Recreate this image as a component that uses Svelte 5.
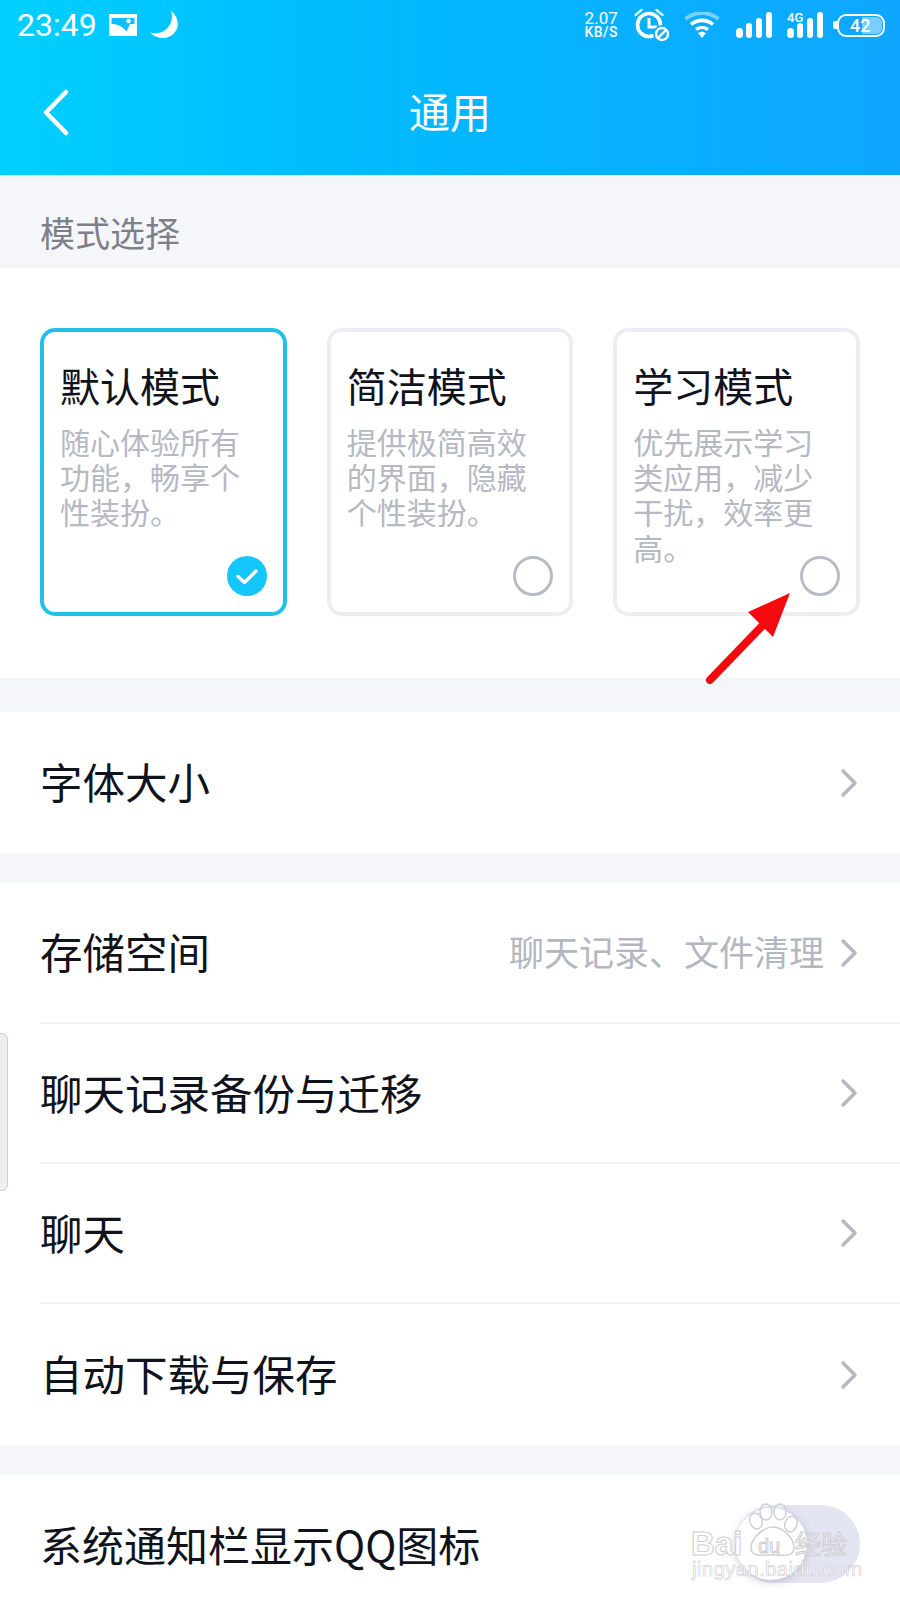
<script>
  const modes = [
    { title: '默认模式', lines: ['随心体验所有', '功能，畅享个', '性装扮。'], active: true },
    { title: '简洁模式', lines: ['提供极简高效', '的界面，隐藏', '个性装扮。'], active: false },
    { title: '学习模式', lines: ['优先展示学习', '类应用，减少', '干扰，效率更', '高。'], active: false }
  ];
  const storage = [
    { label: '存储空间', hint: '聊天记录、文件清理' },
    { label: '聊天记录备份与迁移' },
    { label: '聊天' },
    { label: '自动下载与保存' }
  ];
</script>

{#snippet chevron()}
  <svg class="chevron" width="18" height="30" viewBox="0 0 18 30">
    <path d="M3 3 L15 15 L3 27" fill="none" stroke="#b4b6c0" stroke-width="3.4" stroke-linecap="round" stroke-linejoin="round" />
  </svg>
{/snippet}

{#snippet bars()}
  <svg width="37" height="26" viewBox="0 0 37 26">
    <rect x="0" y="16" width="7" height="10" rx="3.5" fill="#fff" />
    <rect x="10" y="11" width="6" height="15" rx="3" fill="#fff" />
    <rect x="20" y="6" width="6" height="20" rx="3" fill="#fff" />
    <rect x="30" y="0" width="6" height="26" rx="3" fill="#fff" />
  </svg>
{/snippet}

<div class="page">
  <header class="header">
    <div class="status">
      <div class="status-left">
        <span class="time">23:49</span>
        <svg width="28" height="22" viewBox="0 0 28 22">
          <rect width="28" height="22" fill="#fff" />
          <path fill="#0cc0ff" d="M2.500 4H25.500V10H21L17.500 17.500C14 12.500 8.500 10 2.500 10Z" />
          <circle cx="19.500" cy="7" r="2.200" fill="#fff" />
        </svg>
        <svg class="moon" width="28" height="28" viewBox="0 0 28 28">
          <path fill="#fff" d="M21 0C28 5 30 15 25 21C19 29 8 29 0 21.500C8 23.500 15 21 19 15C22 10 23 5 21 0Z" />
        </svg>
      </div>
      <div class="status-right">
        <div class="speed"><span>2.07</span><span>KB/S</span></div>
        <svg class="alarm" width="38" height="34" viewBox="0 0 38 34">
          <circle cx="15" cy="17" r="11.500" fill="none" stroke="#fff" stroke-width="3.600" />
          <path d="M15 10V19H23" fill="none" stroke="#fff" stroke-width="3" />
          <path d="M1.500 7L7.500 2M22.500 2L28.500 7" stroke="#fff" stroke-width="2.500" stroke-linecap="round" opacity="0.800" />
          <circle cx="28" cy="26" r="9" fill="#16acff" />
          <circle cx="28" cy="26" r="6" fill="none" stroke="#fff" stroke-width="2.400" />
          <path d="M24.500 29.500L31.500 22.500" stroke="#fff" stroke-width="2.400" />
        </svg>
        <svg class="wifi" width="36" height="26" viewBox="0 0 36 26">
          <path d="M1.500 7C11 -1 25 -1 34.500 7" fill="none" stroke="#fff" stroke-width="3.800" opacity="0.450" />
          <path d="M7 12.500C13.500 7 22.500 7 29 12.500" fill="none" stroke="#fff" stroke-width="3.600" />
          <path d="M12 17.500C15.500 15 20.500 15 24 17.500" fill="none" stroke="#fff" stroke-width="3.400" />
          <path d="M14 21L18 19.500L22 21L18 26Z" fill="#fff" />
        </svg>
        <div class="signal">{@render bars()}</div>
        <div class="signal-4g">
          <span class="tag">4G</span>
          {@render bars()}
        </div>
        <div class="battery-wrap">
          <span class="nub"></span>
          <div class="battery"><span class="fill"></span><span class="level">42</span></div>
        </div>
      </div>
    </div>
    <div class="nav">
      <svg class="back" width="28" height="48" viewBox="0 0 28 48">
        <path d="M24 3L4 23.500L24 44" fill="none" stroke="#fff" stroke-width="4.500" stroke-linecap="round" stroke-linejoin="round" />
      </svg>
      <h1>通用</h1>
    </div>
  </header>

  <div class="band label">模式选择</div>

  <section class="modes">
    {#each modes as mode}
      <div class="mode" class:active={mode.active}>
        <div class="mode-title">{mode.title}</div>
        <div class="mode-desc">
          {#each mode.lines as line}<div>{line}</div>{/each}
        </div>
        {#if mode.active}
          <svg class="radio" width="40" height="40" viewBox="0 0 40 40">
            <circle cx="20" cy="20" r="20" fill="#13c6fb" />
            <path d="M11 20.500L17.500 26.500L29 15" fill="none" stroke="#fff" stroke-width="3.400" stroke-linecap="round" stroke-linejoin="round" />
          </svg>
        {:else}
          <span class="radio empty"></span>
        {/if}
      </div>
    {/each}
  </section>

  <div class="band small"></div>

  <section class="group">
    <div class="row single"><span>字体大小</span>{@render chevron()}</div>
  </section>

  <div class="band thin"></div>

  <section class="group">
    {#each storage as item}
      <div class="row">
        <span>{item.label}</span>
        {#if item.hint}<span class="hint">{item.hint}</span>{/if}
        {@render chevron()}
      </div>
    {/each}
  </section>

  <div class="band thin"></div>

  <section class="group">
    <div class="row last">
      <span>系统通知栏显示QQ图标</span>
      <span class="toggle"><span class="knob"></span></span>
    </div>
  </section>

  <!-- annotation and overlays painted on the screenshot -->
  <svg class="arrow" width="90" height="96" viewBox="0 0 90 96">
    <path d="M5 89L60 32" stroke="#f4090f" stroke-width="8" stroke-linecap="round" />
    <path d="M85 2L43 21L68 46Z" fill="#f4090f" />
  </svg>
  <div class="side-tab"></div>
  <div class="watermark">
    <svg class="paw" width="56" height="56" viewBox="0 0 56 56">
      <g fill="rgba(255,255,255,0.25)" stroke="#cfcfd3" stroke-width="1.500">
        <ellipse cx="11" cy="18" rx="6" ry="8" transform="rotate(-20 11 18)" />
        <ellipse cx="21" cy="9" rx="6" ry="8" />
        <ellipse cx="35" cy="9" rx="6" ry="8" />
        <ellipse cx="46" cy="21" rx="6" ry="8" transform="rotate(20 46 21)" />
        <path d="M28 24C38 24 50 36 49 46C48 54 38 52 28 52C18 52 7 54 6 46C5 36 18 24 28 24Z" />
      </g>
    </svg>
    <span class="wm-bai">Bai</span><span class="wm-du">du</span><span class="wm-cn">经验</span>
    <div class="wm-url">jingyan.baidu.com</div>
  </div>
</div>

<style>
  :global(body) {
    background: #fff;
  }

  .page {
    position: relative;
    width: 900px;
    height: 1600px;
    overflow: hidden;
    background: #fff;
    color: #10131c;
    font-family: "Noto Sans CJK SC", "Noto Sans", sans-serif;
  }

  .header {
    height: 175px;
    background: linear-gradient(90deg, #00d0ff 0%, #00bcff 35%, #0ea6ff 100%);
    color: #fff;
  }

  .status {
    height: 50px;
    display: flex;
    justify-content: space-between;
    align-items: center;
    padding: 0 15px 0 17px;
  }

  .status-left,
  .status-right {
    display: flex;
    align-items: center;
  }

  .time {
    font-family: Roboto, sans-serif;
    font-size: 32px;
    line-height: 1;
    margin-right: 12px;
  }

  .moon {
    margin-left: 13px;
  }

  .speed {
    display: flex;
    flex-direction: column;
    align-items: center;
    font-family: Roboto, sans-serif;
    font-size: 17px;
    line-height: 14px;
    margin-right: 16px;
  }

  .speed span:last-child {
    font-size: 14px;
    font-weight: 500;
    letter-spacing: 0.5px;
  }

  .wifi {
    margin: 0 16px 0 12px;
  }

  .signal {
    display: flex;
    margin-right: 14px;
  }

  .signal-4g {
    position: relative;
    margin-right: 9px;
    display: flex;
  }

  .tag {
    position: absolute;
    left: 0;
    top: 0;
    font-family: Roboto, sans-serif;
    font-size: 13px;
    font-weight: 500;
    line-height: 12px;
  }

  .battery-wrap {
    display: flex;
    align-items: center;
  }

  .nub {
    width: 4px;
    height: 8px;
    background: #fff;
    border-radius: 2px 0 0 2px;
  }

  .battery {
    position: relative;
    width: 48px;
    height: 23px;
    box-sizing: border-box;
    border: 2px solid #fff;
    border-radius: 9px;
    padding-left: 11px;
    display: flex;
    align-items: center;
    overflow: hidden;
  }

  .battery .fill {
    position: absolute;
    right: 1px;
    top: 1px;
    bottom: 1px;
    width: 20px;
    border-radius: 0 6px 6px 0;
    background: rgba(255, 255, 255, 0.45);
  }

  .level {
    position: relative;
    font-family: Roboto, sans-serif;
    font-size: 18px;
    font-weight: 500;
  }

  .nav {
    position: relative;
    height: 125px;
    display: flex;
    align-items: center;
    justify-content: center;
  }

  .back {
    position: absolute;
    left: 42px;
    top: 39px;
  }

  h1 {
    margin: 0 0 4px;
    font-size: 41px;
    font-weight: 400;
    line-height: 1;
  }

  .band {
    background: #f5f6fa;
  }

  .label {
    height: 93px;
    box-sizing: border-box;
    padding: 34px 0 0 40px;
    font-size: 35px;
    line-height: 46px;
    color: #7e8089;
  }

  .small {
    height: 34px;
  }

  .thin {
    height: 30px;
  }

  .modes {
    display: flex;
    gap: 40px;
    padding: 60px 40px 62px;
    height: 410px;
    box-sizing: border-box;
  }

  .mode {
    position: relative;
    flex: 1;
    box-sizing: border-box;
    border: 4px solid #eceef4;
    border-radius: 15px;
    padding: 24px 0 0 16px;
  }

  .mode.active {
    border-color: #22c0e9;
  }

  .mode-title {
    font-size: 40px;
    line-height: 58px;
    white-space: nowrap;
  }

  .mode-desc {
    margin-top: 10px;
    font-size: 30px;
    line-height: 35.200px;
    color: #b6b8c2;
    white-space: nowrap;
  }

  .radio {
    position: absolute;
    right: 16px;
    bottom: 16px;
    width: 40px;
    height: 40px;
    box-sizing: border-box;
  }

  .radio.empty {
    border: 3px solid #babcc5;
    border-radius: 50%;
  }

  .group {
    padding-left: 40px;
  }

  .row {
    position: relative;
    height: 140px;
    display: flex;
    align-items: center;
    font-size: 42.500px;
    border-bottom: 2px solid #f0f1f4;
    box-sizing: border-box;
    padding: 0 42px 4px 0;
  }

  .row:first-child,
  .row:last-child {
    height: 141px;
  }

  .row:last-child,
  .row.single {
    border-bottom: 0;
  }

  .row.last {
    height: 125px;
    align-items: flex-start;
    padding: 38px 0 0;
    font-size: 42px;
  }

  .row .chevron {
    margin-left: auto;
    margin-top: 4px;
  }

  .hint {
    margin-left: auto;
    margin-right: 16px;
    font-size: 35px;
    color: #b4b6c0;
  }

  .hint + .chevron {
    margin-left: 0;
  }

  .toggle {
    position: absolute;
    right: 40px;
    top: 30px;
    width: 125px;
    height: 78px;
    border-radius: 39px;
    background: #e4e5f3;
  }

  .knob {
    position: absolute;
    left: 0;
    top: 3px;
    width: 72px;
    height: 72px;
    border-radius: 50%;
    background: #fff;
    box-shadow: 0 2px 8px rgba(90, 90, 130, 0.3);
  }

  .arrow {
    position: absolute;
    left: 705px;
    top: 591px;
  }

  .side-tab {
    position: absolute;
    left: -2px;
    top: 1033px;
    width: 10px;
    height: 158px;
    box-sizing: border-box;
    border: 1px solid #d0d0d4;
    border-radius: 0 6px 6px 0;
    background: #eeeef2;
  }

  .watermark {
    position: absolute;
    left: 690px;
    top: 1502px;
    width: 170px;
    height: 84px;
    font-family: "Liberation Sans", sans-serif;
    color: rgba(255, 255, 255, 0.75);
    -webkit-text-stroke: 1px #cdcdd1;
  }

  .paw {
    position: absolute;
    left: 55px;
    top: 1px;
  }

  .wm-bai {
    position: absolute;
    left: 1px;
    top: 22px;
    font-size: 33px;
    font-weight: 700;
    line-height: 40px;
  }

  .wm-du {
    position: absolute;
    left: 68px;
    top: 32px;
    font-size: 20px;
    line-height: 24px;
  }

  .wm-cn {
    position: absolute;
    left: 105px;
    top: 25px;
    font-family: "Noto Sans CJK SC", sans-serif;
    font-size: 26px;
    line-height: 32px;
    white-space: nowrap;
  }

  .wm-url {
    position: absolute;
    left: 2px;
    top: 55px;
    font-size: 20.500px;
    line-height: 24px;
    white-space: nowrap;
    letter-spacing: 0.3px;
    -webkit-text-stroke: 0.6px #cdcdd1;
  }
</style>
